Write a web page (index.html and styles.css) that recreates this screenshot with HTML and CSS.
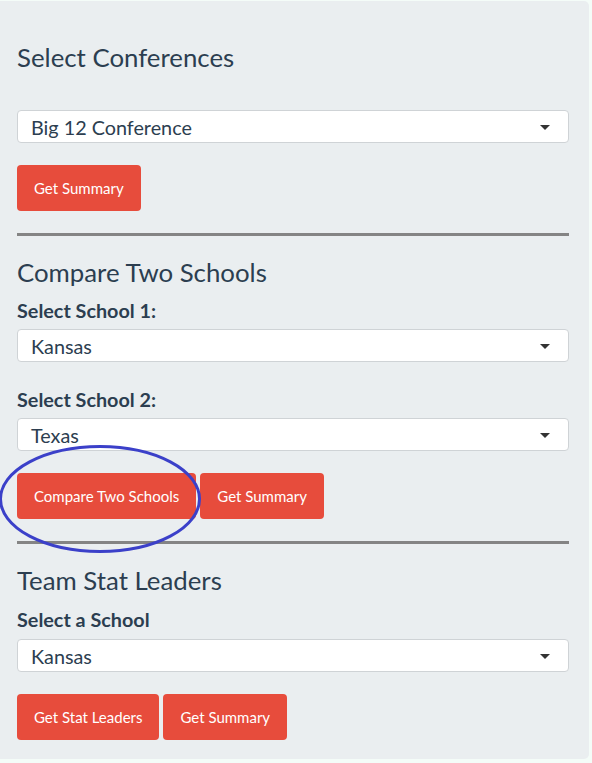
FILE: index.html
```html
<!DOCTYPE html>
<html>
<head>
<meta charset="utf-8">
<link rel="stylesheet" href="styles.css">
</head>
<body>
<div class="page">
  <form class="well">
    <h3 class="title title-first">Select Conferences</h3>
    <div class="select select-first"><span class="select-value">Big 12 Conference</span><span class="caret"></span></div>
    <div class="btn-row"><button type="button" class="btn">Get Summary</button></div>
    <hr class="rule">

    <h3 class="title">Compare Two Schools</h3>
    <label class="field-label">Select School 1:</label>
    <div class="select"><span class="select-value">Kansas</span><span class="caret"></span></div>
    <label class="field-label field-label-spaced">Select School 2:</label>
    <div class="select"><span class="select-value">Texas</span><span class="caret"></span></div>
    <div class="btn-row">
      <span class="circled">
        <button type="button" class="btn">Compare Two Schools</button>
        <svg class="circle-mark" width="204" height="110" viewBox="0 0 204 110"><ellipse cx="101" cy="54" rx="99.5" ry="52.5" fill="none" stroke="#3b40c9" stroke-width="3"/></svg>
      </span>
      <button type="button" class="btn">Get Summary</button>
    </div>
    <hr class="rule">

    <h3 class="title">Team Stat Leaders</h3>
    <label class="field-label field-label-third">Select a School</label>
    <div class="select"><span class="select-value">Kansas</span><span class="caret"></span></div>
    <div class="btn-row">
      <button type="button" class="btn">Get Stat Leaders</button>
      <button type="button" class="btn">Get Summary</button>
    </div>
  </form>
</div>
</body>
</html>
```

FILE: styles.css
```css
html, body {
  margin: 0;
  padding: 0;
  background: #f4fcf8;
}
body {
  font-family: Lato, "Open Sans", sans-serif;
  color: #2c3e50;
}
.page {
  width: 589px;
  padding-top: 1px;
}
.well {
  display: block;
  margin: 0;
  background: #eaeef0;
  border-radius: 0 5px 5px 0;
  padding: 40px 20px 19px 17px;
}
.title {
  margin: 0;
  font-size: 25.8px;
  font-weight: 400;
  line-height: 32px;
  color: #2c3e50;
}
.title-first {
  margin-bottom: 37px;
}
.rule + .title {
  margin-top: 20px;
}
.field-label {
  display: block;
  font-size: 19.8px;
  font-weight: 700;
  line-height: 24px;
  margin-top: 10px;
  margin-bottom: 7px;
}
.field-label-spaced {
  margin-top: 25px;
}
.field-label-third {
  margin-top: 11px;
  margin-bottom: 8px;
}
.select {
  box-sizing: border-box;
  height: 33px;
  background: #fff;
  border: 1px solid #cfd3d6;
  border-radius: 4px;
  display: flex;
  align-items: center;
  justify-content: space-between;
  padding: 0 18px 0 13px;
}
.select-value {
  font-size: 19.8px;
  line-height: 24px;
  color: #2c3e50;
}
.caret {
  width: 0;
  height: 0;
  border-left: 5px solid transparent;
  border-right: 5px solid transparent;
  border-top: 5px solid #333;
  margin-top: 1px;
}
.btn-row {
  margin-top: 22px;
  display: flex;
  gap: 4px;
}
.btn {
  box-sizing: border-box;
  height: 46px;
  padding: 0 17px;
  background: #e74c3c;
  color: #fff;
  border: none;
  border-radius: 4px;
  font-family: Lato, "Open Sans", sans-serif;
  font-size: 15px;
  line-height: 20px;
  cursor: pointer;
}
.circled {
  position: relative;
  display: inline-flex;
}
.circle-mark {
  position: absolute;
  left: -18px;
  top: -28px;
  pointer-events: none;
}
.rule {
  margin: 22px 0 0;
  border: 0;
  height: 3px;
  background: #848484;
}
```
